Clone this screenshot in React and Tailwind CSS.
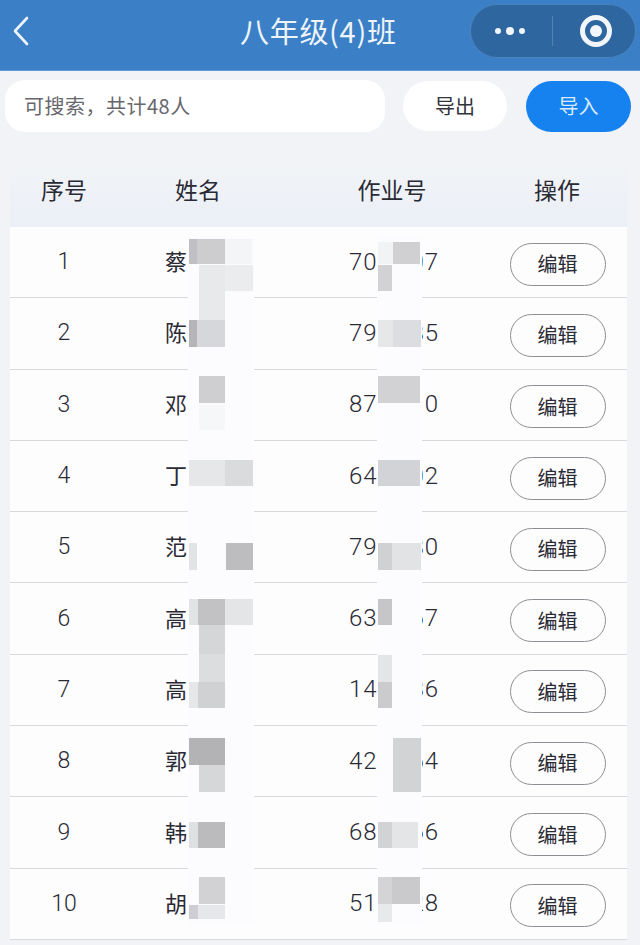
const rows = [
  ["蔡", "706", "07"], ["陈", "792", "85"], ["邓", "879", "10"], ["丁", "642", "02"], ["范", "792", "80"],
  ["高", "630", "67"], ["高", "140", "86"], ["郭", "425", "64"], ["韩", "688", "66"], ["胡", "515", "28"],
];

// mosaic blocks lying over the names and numbers: [x0, y0, x1, y1, colour]
const mosaic = [
  [189,239,197,264,"#c0c0c4"],[197,239,225,264,"#cdcdd0"],[225,239,252,264,"#f4f5f7"],
  [199,265,225,320,"#e8e9eb"],[225,265,253,291,"#ebecee"],
  [189,320,197,347,"#b5b5b8"],[197,320,225,347,"#d6d7da"],
  [199,376,225,403,"#cfcfd2"],[199,405,225,430,"#f6f7f9"],
  [189,460,225,486,"#e6e7e9"],[225,460,253,486,"#dadbdd"],
  [189,543,197,570,"#e2e3e5"],[226,543,253,570,"#bdbdc0"],
  [189,599,198,625,"#e2e3e5"],[198,599,225,625,"#c2c2c5"],[225,599,253,625,"#e4e5e7"],
  [199,625,225,654,"#d5d6d8"],[199,654,225,682,"#dcdddf"],
  [189,682,198,708,"#e6e7e9"],[198,682,225,708,"#d0d1d3"],
  [189,738,225,765,"#b3b3b6"],[199,765,225,792,"#d6d7d9"],
  [189,822,198,848,"#dfe0e2"],[198,822,225,848,"#bbbbbe"],
  [199,877,225,904,"#d2d2d5"],[189,905,198,919,"#cdcdd3"],[198,905,225,919,"#e6e7ea"],
  [393,242,420,264,"#d0d0d3"],[378,242,393,264,"#f2f3f5"],[378,265,392,291,"#d2d2d5"],
  [378,320,393,347,"#e6e7e9"],[393,320,421,347,"#dcdde0"],
  [378,376,420,403,"#d2d2d5"],
  [378,460,420,486,"#d2d3d6"],
  [378,543,392,570,"#d0d1d3"],[392,543,421,570,"#e2e3e5"],
  [378,599,392,625,"#c6c6c9"],
  [378,655,392,682,"#e4e5e7"],[378,682,392,708,"#cbcbce"],
  [393,738,421,792,"#d2d3d5"],
  [378,822,392,848,"#d2d3d5"],[392,822,418,848,"#e4e5e7"],
  [378,877,392,904,"#d4d4d7"],[392,877,420,904,"#cacacd"],[378,904,392,922,"#e8e9eb"],
];

const strips = [[188,236,254,925],[377,236,422,925]];

function Block({ b, color }) {
  return (
    <div
      className="absolute"
      style={{ left: b[0], top: b[1], width: b[2] - b[0], height: b[3] - b[1], background: color }}
    />
  );
}

const grid = "grid grid-cols-[108px_160px_228px_102px] items-center";

export default function App() {
  return (
    <div className="relative w-[640px] h-[945px] overflow-hidden bg-[#f1f3f6] text-[#2a2a35] font-['Noto_Sans_CJK_SC','Noto_Sans',sans-serif]">
      <header className="relative flex items-center justify-between h-[71px] pl-[12px] pr-[4px] pb-[9px] bg-[#3b80c6] border-b border-[#5e9ad6]">
        <svg width="18" height="30" viewBox="0 0 18 30" fill="none" stroke="#eef4fa" strokeWidth="2.6" strokeLinecap="round" strokeLinejoin="round">
          <path d="M15 2 L3 15 L15 28" />
        </svg>
        <h1 className="absolute left-[240px] top-[9px] text-[29px] leading-[42px] font-normal text-[#eef4fa] tracking-[0.7px] whitespace-nowrap">八年级(4)班</h1>
        <div className="flex items-center w-[166px] h-[54px] rounded-full bg-[#2e669f] border border-[#4a83bd]">
          <div className="flex flex-1 items-center justify-center gap-[5px] pr-[4px]">
            <span className="w-[6px] h-[6px] rounded-full bg-[#f2f6fa]" />
            <span className="w-[8px] h-[8px] rounded-full bg-[#f2f6fa]" />
            <span className="w-[6px] h-[6px] rounded-full bg-[#f2f6fa]" />
          </div>
          <div className="w-px h-[30px] bg-[#4f82b5]" />
          <div className="flex w-[82px] items-center justify-center pl-[3px]">
            <span className="flex items-center justify-center w-[32px] h-[32px] rounded-full border-[5px] border-[#f2f6fa]">
              <span className="w-[12px] h-[12px] rounded-full bg-[#f2f6fa]" />
            </span>
          </div>
        </div>
      </header>

      <div className="flex items-center h-[52px] mt-[9px] pl-[5px] pr-[9px]">
        <div className="flex items-center w-[380px] h-[52px] pl-[19px] rounded-[20px] bg-white text-[20px] tracking-[0.5px] text-[#67676d]">可搜索，共计48人</div>
        <button className="flex items-center justify-center w-[104px] h-[50px] ml-[18px] rounded-full bg-white text-[20px] text-[#33333b]">导出</button>
        <button className="flex items-center justify-center w-[105px] h-[51px] ml-[19px] rounded-full bg-[#1582ef] text-[20px] text-[#dcebfb]">导入</button>
      </div>

      <section className="mx-[10px] mt-[33px] w-[617px]">
        <div className={`${grid} h-[62px] pb-[14px] bg-linear-to-b from-[#f1f3f6] to-[#ebf0f7] text-[23px] text-center`}>
          <div>序号</div>
          <div>姓名</div>
          <div>作业号</div>
          <div>操作</div>
        </div>
        {rows.map(([name, a, b], i) => (
          <div key={i} className={`${grid} h-[71.3px] bg-[#fdfdfe] border-b border-[#d9dadd]`}>
            <div className="text-center text-[23px] leading-none pb-[1px] font-['Roboto',sans-serif] font-light">{i + 1}</div>
            <div className="pl-[47px] pb-[4px] text-[22px] leading-none">{name}</div>
            <div className="flex justify-between w-[90px] ml-[71px] pb-[1px] text-[24px] leading-none font-['Roboto',sans-serif] font-light tracking-[1px]">
              <span>{a}</span>
              <span>{b}</span>
            </div>
            <button className="flex items-center justify-center justify-self-center w-[96px] h-[43px] mt-[4px] ml-[1px] rounded-full border border-[#8e8e94] text-[20px] text-[#2a2a35]">编辑</button>
          </div>
        ))}
      </section>

      {strips.map((b, i) => <Block key={i} b={b} color="#fcfcfe" />)}
      {mosaic.map((b, i) => <Block key={i} b={b} color={b[4]} />)}
    </div>
  );
}
